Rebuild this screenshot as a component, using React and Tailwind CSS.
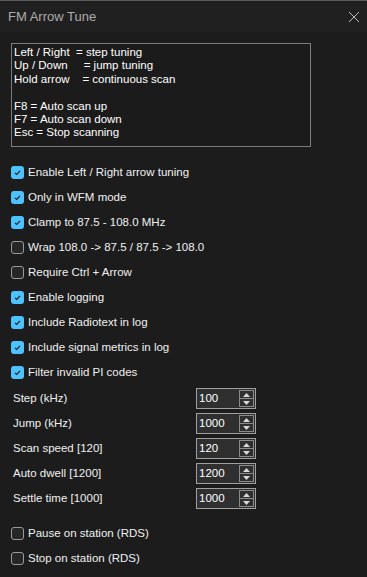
import React from "react";

const font = { fontFamily: '"Liberation Sans", Arial, sans-serif' };

function Check({ checked, label }) {
  return (
    <div className="flex items-center h-[25px]">
      {checked ? (
        <div className="w-[13px] h-[13px] rounded-[3px] bg-[#4cc2ff] flex items-center justify-center">
          <svg width="9" height="9" viewBox="0 0 9 9">
            <path d="M2 4.8 L3.7 6.4 L7 2.8" fill="none" stroke="#1a1a1a" strokeWidth="1.1" />
          </svg>
        </div>
      ) : (
        <div className="w-[13px] h-[13px] rounded-[3px] border border-[#9a9a9a] bg-[#262626]" />
      )}
      <span className="ml-[4px] text-[11.5px] text-[#f0f0f0] leading-none">{label}</span>
    </div>
  );
}

function Spin({ label, value }) {
  return (
    <div className="flex items-center h-[25px]">
      <span className="pl-[2px] w-[185px] text-[11.5px] text-[#f0f0f0]">{label}</span>
      <div className="w-[60px] h-[21px] border border-[#a0a0a0] bg-[#2f2f2f] flex items-center">
        <span className="flex-1 pl-[2px] text-[11.5px] text-white leading-none">{value}</span>
        <div className="w-[15px] h-[17px] mr-[1px] border border-[#8a8a8a] flex flex-col">
          <div className="flex-1 flex items-center justify-center border-b border-[#8a8a8a]">
            <svg width="7" height="4" viewBox="0 0 7 4"><path d="M0 4 L3.5 0 L7 4Z" fill="#d8d8d8" /></svg>
          </div>
          <div className="flex-1 flex items-center justify-center">
            <svg width="7" height="4" viewBox="0 0 7 4"><path d="M0 0 L3.5 4 L7 0Z" fill="#d8d8d8" /></svg>
          </div>
        </div>
      </div>
    </div>
  );
}

export default function App() {
  return (
    <div className="w-[367px] h-[577px] bg-[#1c1c1c] border-t border-[#5a5a5a] flex flex-col overflow-hidden" style={font}>
      <div className="h-[31px] bg-[#202020] flex items-center justify-between pl-[8px] pr-[7px]">
        <span className="text-[13px] text-[#ababab]">FM Arrow Tune</span>
        <svg width="12" height="12" viewBox="0 0 12 12">
          <path d="M1 1 L11 11 M11 1 L1 11" stroke="#bdbdbd" strokeWidth="1" />
        </svg>
      </div>
      <div className="pl-[11px] pt-[11px] flex flex-col">
        <div className="w-[300px] h-[104px] border border-[#7c7c7c] bg-[#1b1b1b] pl-[2px] pt-[2px] text-[11.5px] leading-[13.4px] text-white whitespace-pre">
          <div>{"Left / Right  = step tuning"}</div>
          <div>{"Up / Down     = jump tuning"}</div>
          <div>{"Hold arrow    = continuous scan"}</div>
          <div>&nbsp;</div>
          <div>F8 = Auto scan up</div>
          <div>F7 = Auto scan down</div>
          <div>Esc = Stop scanning</div>
        </div>
        <div className="mt-[13px] flex flex-col">
          <Check checked label="Enable Left / Right arrow tuning" />
          <Check checked label="Only in WFM mode" />
          <Check checked label="Clamp to 87.5 - 108.0 MHz" />
          <Check label="Wrap 108.0 -> 87.5 / 87.5 -> 108.0" />
          <Check label="Require Ctrl + Arrow" />
          <Check checked label="Enable logging" />
          <Check checked label="Include Radiotext in log" />
          <Check checked label="Include signal metrics in log" />
          <Check checked label="Filter invalid PI codes" />
        </div>
        <div className="mt-[1px] flex flex-col">
          <Spin label="Step (kHz)" value="100" />
          <Spin label="Jump (kHz)" value="1000" />
          <Spin label="Scan speed [120]" value="120" />
          <Spin label="Auto dwell [1200]" value="1200" />
          <Spin label="Settle time [1000]" value="1000" />
        </div>
        <div className="mt-[10px] flex flex-col">
          <Check label="Pause on station (RDS)" />
          <Check label="Stop on station (RDS)" />
        </div>
      </div>
    </div>
  );
}
